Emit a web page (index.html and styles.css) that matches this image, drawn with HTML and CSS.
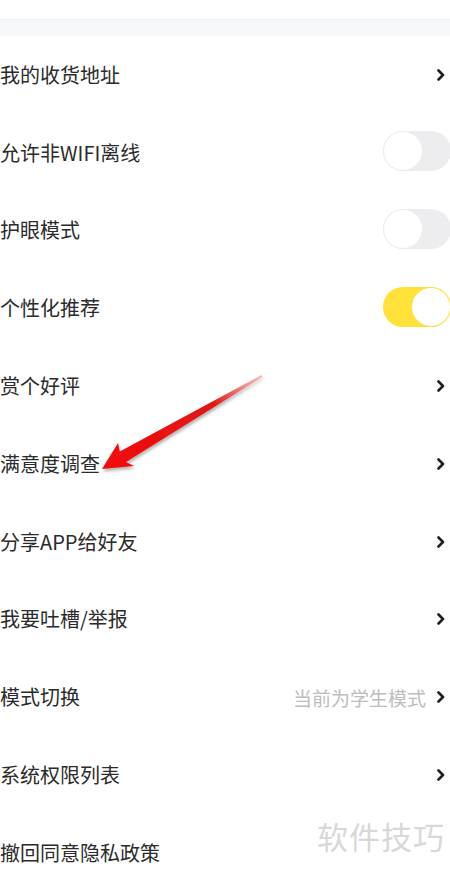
FILE: index.html
```html
<!DOCTYPE html>
<html lang="zh-CN">
<head>
  <meta charset="UTF-8" />
  <title>设置</title>
  <meta name="viewport" content="width=device-width, initial-scale=1.0" />
  <link rel="stylesheet" href="styles.css">
</head>
<body>
  <div class="page">
    <div class="top-space"></div>
    <div class="band"></div>

    <ul class="settings">
      <li class="row">
        <span class="label">我的收货地址</span>
        <span class="chevron"><svg viewBox="0 0 8 12" width="8" height="12"><path d="M1.5 1.5 L6 6 L1.5 10.5" /></svg></span>
      </li>
      <li class="row">
        <span class="label">允许非WIFI离线</span>
        <span class="switch"><span class="knob"></span></span>
      </li>
      <li class="row">
        <span class="label">护眼模式</span>
        <span class="switch"><span class="knob"></span></span>
      </li>
      <li class="row">
        <span class="label">个性化推荐</span>
        <span class="switch on"><span class="knob"></span></span>
      </li>
      <li class="row">
        <span class="label">赏个好评</span>
        <span class="chevron"><svg viewBox="0 0 8 12" width="8" height="12"><path d="M1.5 1.5 L6 6 L1.5 10.5" /></svg></span>
      </li>
      <li class="row">
        <span class="label">满意度调查</span>
        <span class="chevron"><svg viewBox="0 0 8 12" width="8" height="12"><path d="M1.5 1.5 L6 6 L1.5 10.5" /></svg></span>
      </li>
      <li class="row">
        <span class="label">分享APP给好友</span>
        <span class="chevron"><svg viewBox="0 0 8 12" width="8" height="12"><path d="M1.5 1.5 L6 6 L1.5 10.5" /></svg></span>
      </li>
      <li class="row">
        <span class="label">我要吐槽/举报</span>
        <span class="chevron"><svg viewBox="0 0 8 12" width="8" height="12"><path d="M1.5 1.5 L6 6 L1.5 10.5" /></svg></span>
      </li>
      <li class="row">
        <span class="label">模式切换</span>
        <span class="extra">
          <span class="value">当前为学生模式</span>
          <span class="chevron"><svg viewBox="0 0 8 12" width="8" height="12"><path d="M1.5 1.5 L6 6 L1.5 10.5" /></svg></span>
        </span>
      </li>
      <li class="row">
        <span class="label">系统权限列表</span>
        <span class="chevron"><svg viewBox="0 0 8 12" width="8" height="12"><path d="M1.5 1.5 L6 6 L1.5 10.5" /></svg></span>
      </li>
      <li class="row">
        <span class="label">撤回同意隐私政策</span>
      </li>
    </ul>

    <!-- red pointer drawn on top of the screenshot -->
    <svg class="pointer" viewBox="0 0 450 872" width="450" height="872">
      <defs>
        <linearGradient id="red" x1="262" y1="376" x2="102" y2="469" gradientUnits="userSpaceOnUse">
          <stop offset="0" stop-color="#f08080" stop-opacity="0.5" />
          <stop offset="0.3" stop-color="#e01818" />
          <stop offset="1" stop-color="#f20a0a" />
        </linearGradient>
        <filter id="shade" x="-20%" y="-20%" width="140%" height="140%">
          <feDropShadow dx="1" dy="2.5" stdDeviation="1.8" flood-color="#000" flood-opacity="0.3" />
        </filter>
      </defs>
      <polygon filter="url(#shade)" fill="url(#red)"
        points="102,469 134,466 126,462 262.6,376.9 261.4,375.1 119.8,451.5 118,443" />
    </svg>

    <div class="watermark">软件技巧</div>
  </div>
</body>
</html>
```

FILE: styles.css
```css
* {
  box-sizing: border-box;
}

body {
  margin: 0;
  background: #fff;
  font-family: "Noto Sans CJK SC", "Noto Sans", sans-serif;
  color: #2b2b2b;
}

.page {
  position: relative;
  width: 450px;
  height: 872px;
  overflow: hidden;
}

.top-space {
  height: 19px;
}

.band {
  height: 17px;
  background: #f7f8fa;
  border-top: 1px solid #eef0f2;
}

.settings {
  list-style: none;
  margin: 0;
  padding: 0;
}

.row {
  height: 77.8px;
  display: flex;
  align-items: center;
  justify-content: space-between;
  padding-right: 5px;
}

.label {
  font-size: 20px;
  line-height: 1;
}

.chevron {
  display: flex;
  align-items: center;
}

.chevron svg path {
  fill: none;
  stroke: #1f1f1f;
  stroke-width: 2.6;
  stroke-linecap: round;
  stroke-linejoin: round;
}

.extra {
  display: flex;
  align-items: center;
  gap: 11px;
}

.value {
  font-size: 19px;
  color: #bdbdbd;
}

.switch {
  position: relative;
  width: 68px;
  height: 40px;
  margin-top: -3px;
  margin-right: -6px;
  border-radius: 20px;
  background: #ededf0;
}

.switch .knob {
  position: absolute;
  left: 0;
  top: 0;
  width: 40px;
  height: 40px;
  border-radius: 50%;
  background: #fff;
  border: 1.5px solid #ededf0;
}

.switch.on {
  background: #ffe13a;
}

.switch.on .knob {
  left: auto;
  right: 0;
  border-color: #ffe13a;
}

.pointer {
  position: absolute;
  left: 0;
  top: 0;
  pointer-events: none;
}

.watermark {
  position: absolute;
  right: 5px;
  top: 813px;
  font-size: 31px;
  letter-spacing: 1px;
  color: #d8d8d8;
}
```
